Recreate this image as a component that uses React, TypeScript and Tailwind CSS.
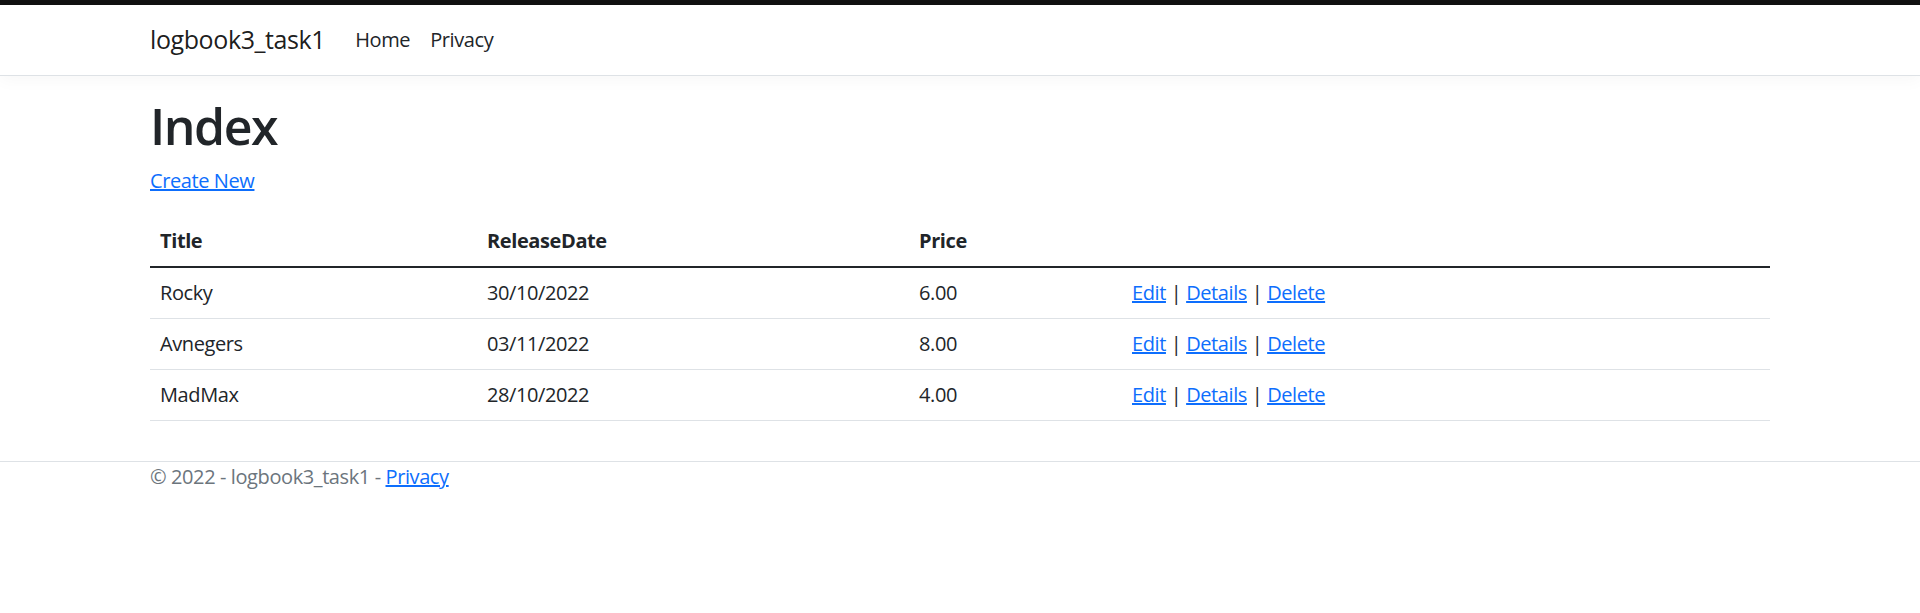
const font = { fontFamily: '"Segoe UI", "Open Sans", "Liberation Sans", sans-serif' };

type Movie = { title: string; releaseDate: string; price: string };

const movies: Movie[] = [
  { title: "Rocky", releaseDate: "30/10/2022", price: "6.00" },
  { title: "Avnegers", releaseDate: "03/11/2022", price: "8.00" },
  { title: "MadMax", releaseDate: "28/10/2022", price: "4.00" },
];

const App = () => {
  return (
    <div
      className="min-h-screen bg-white text-[20px] leading-[30px] tracking-[-0.02em] text-[#212529]"
      style={font}
    >
      <div className="h-[5px] bg-[#111111]" />
      <header>
        <nav className="h-[71px] border-b border-[#dee2e6] bg-white shadow-[0_5px_15px_rgba(0,0,0,0.03)]">
          <div className="mx-auto flex h-full w-[1650px] items-center px-[15px]">
            <a className="mr-[20px] py-[6px] text-[25px] leading-[37.5px] text-black/90" href="#">
              logbook3_task1
            </a>
            <ul className="flex">
              <li>
                <a className="px-[10px] py-[10px] text-[#212529]" href="#">Home</a>
              </li>
              <li>
                <a className="px-[10px] py-[10px] text-[#212529]" href="#">Privacy</a>
              </li>
            </ul>
          </div>
        </nav>
      </header>

      <div className="mx-auto mt-[20px] w-[1650px] px-[15px]">
        <main className="pb-[20px]">
          <h1 className="mb-[10px] text-[50px] font-semibold leading-[60px] tracking-[-0.03em]">Index</h1>
          <p className="mb-[20px]">
            <a className="text-[#0d6efd] underline" href="#">Create New</a>
          </p>
          <table className="mb-[20px] w-full table-fixed border-collapse">
            <thead>
              <tr className="border-b-2 border-[#212529]">
                <th className="w-[327px] p-[10px] text-left font-bold">Title</th>
                <th className="w-[432px] p-[10px] text-left font-bold">ReleaseDate</th>
                <th className="w-[213px] p-[10px] text-left font-bold">Price</th>
                <th className="p-[10px]" />
              </tr>
            </thead>
            <tbody>
              {movies.map((m) => (
                <tr key={m.title} className="border-b border-[#dee2e6]">
                  <td className="p-[10px]">{m.title}</td>
                  <td className="p-[10px]">{m.releaseDate}</td>
                  <td className="p-[10px]">{m.price}</td>
                  <td className="p-[10px]">
                    <a className="text-[#0d6efd] underline" href="#">Edit</a> |{" "}
                    <a className="text-[#0d6efd] underline" href="#">Details</a> |{" "}
                    <a className="text-[#0d6efd] underline" href="#">Delete</a>
                  </td>
                </tr>
              ))}
            </tbody>
          </table>
        </main>
      </div>

      <footer className="border-t border-[#dee2e6] text-[#6c757d]">
        <div className="mx-auto w-[1650px] px-[15px]">
          &copy; 2022 - logbook3_task1 -{" "}
          <a className="text-[#0d6efd] underline" href="#">Privacy</a>
        </div>
      </footer>
    </div>
  );
};

export default App;
